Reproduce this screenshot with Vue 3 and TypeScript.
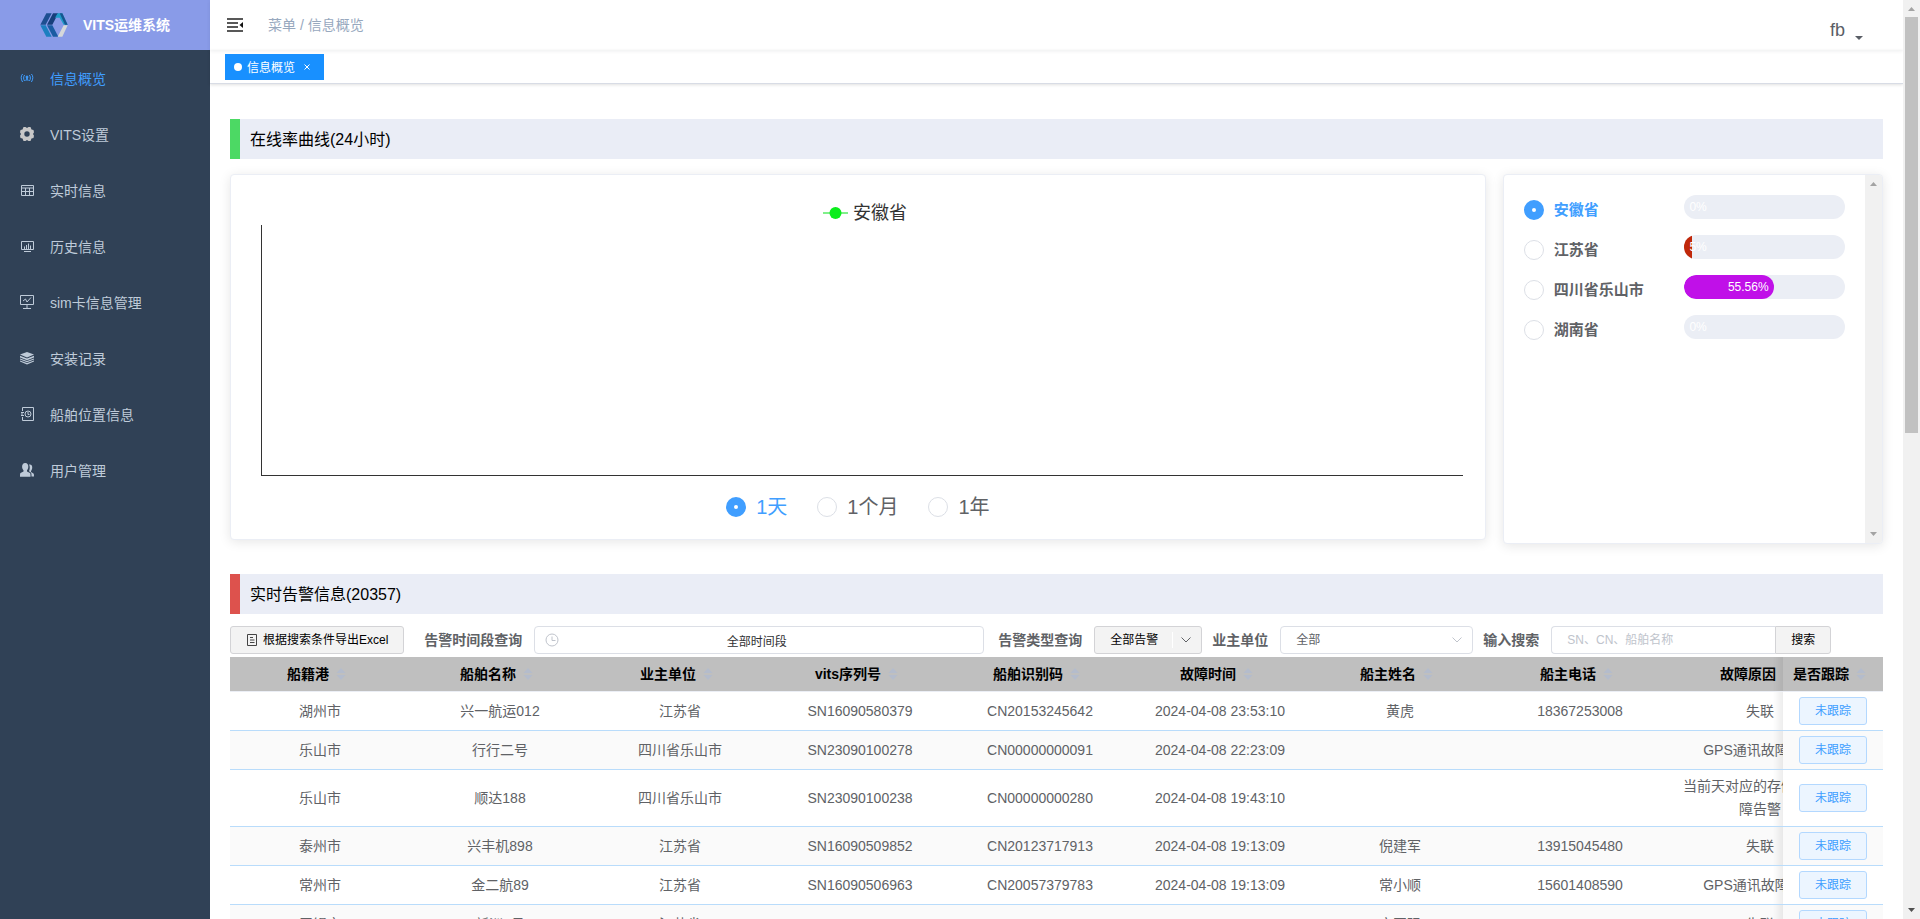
<script setup lang="ts">
import { ref } from 'vue'

interface AlarmRow {
  port: string
  ship: string
  owner: string
  sn: string
  cn: string
  time: string
  person: string
  phone: string
  reason: string
}

interface Province {
  name: string
  rate: number
  color: string
}

const menu: { icon: string; label: string }[] = [
  { icon: 'signal', label: '信息概览' },
  { icon: 'gear', label: 'VITS设置' },
  { icon: 'grid', label: '实时信息' },
  { icon: 'monitor', label: '历史信息' },
  { icon: 'board', label: 'sim卡信息管理' },
  { icon: 'layers', label: '安装记录' },
  { icon: 'book', label: '船舶位置信息' },
  { icon: 'users', label: '用户管理' },
]

const provinces: Province[] = [
  { name: '安徽省', rate: 0, color: '#409eff' },
  { name: '江苏省', rate: 5, color: '#c0280a' },
  { name: '四川省乐山市', rate: 55.56, color: '#c010e8' },
  { name: '湖南省', rate: 0, color: '#409eff' },
]

const ranges: string[] = ['1天', '1个月', '1年']
const columns: string[] = [
  '船籍港', '船舶名称', '业主单位', 'vits序列号', '船舶识别码',
  '故障时间', '船主姓名', '船主电话', '故障原因',
]

const rows: AlarmRow[] = [
  { port: '湖州市', ship: '兴一航运012', owner: '江苏省', sn: 'SN16090580379', cn: 'CN20153245642', time: '2024-04-08 23:53:10', person: '黄虎', phone: '18367253008', reason: '失联' },
  { port: '乐山市', ship: '行行二号', owner: '四川省乐山市', sn: 'SN23090100278', cn: 'CN00000000091', time: '2024-04-08 22:23:09', person: '', phone: '', reason: 'GPS通讯故障告警' },
  { port: '乐山市', ship: '顺达188', owner: '四川省乐山市', sn: 'SN23090100238', cn: 'CN00000000280', time: '2024-04-08 19:43:10', person: '', phone: '', reason: '当前天对应的存储设备故障告警' },
  { port: '泰州市', ship: '兴丰机898', owner: '江苏省', sn: 'SN16090509852', cn: 'CN20123717913', time: '2024-04-08 19:13:09', person: '倪建军', phone: '13915045480', reason: '失联' },
  { port: '常州市', ship: '金二航89', owner: '江苏省', sn: 'SN16090506963', cn: 'CN20057379783', time: '2024-04-08 19:13:09', person: '常小顺', phone: '15601408590', reason: 'GPS通讯故障告警' },
  { port: '无锡市', ship: '新洲1号', owner: '江苏省', sn: '', cn: '', time: '', person: '方国强', phone: '', reason: '失联' },
]

const activeMenu = ref('信息概览')
const province = ref('安徽省')
const range = ref('1天')
const period = ref('全部时间段')
const keyword = ref('')
</script>

<template>
  <div class="layout">
    <aside class="sidebar">
      <div class="brand">
        <svg class="brand-logo" viewBox="0 0 82 72" aria-hidden="true">
          <path d="M18 1H34L16 35H0z" fill="#1d4f91" />
          <path d="M0 37H16L34 71H18z" fill="#1b7fc0" />
          <path d="M38 1H54L36 35H20z" fill="#173f7c" />
          <path d="M20 37H36L54 71H38z" fill="#1a5ca3" />
          <path d="M44 14L52 1H66L82 35H70L58 14z" fill="#1f9cc9" />
          <path d="M58 1H66L82 35H74z" fill="#17568f" />
          <path d="M70 37H82L66 71H52z" fill="#d5d8da" />
        </svg>
        <h1>VITS运维系统</h1>
      </div>
      <nav>
        <a
          v-for="item in menu"
          :key="item.label"
          href="#"
          class="menu-item"
          :class="{ active: activeMenu === item.label }"
          @click.prevent="activeMenu = item.label"
        >
          <svg class="menu-icon" viewBox="0 0 14 14" aria-hidden="true">
            <g v-if="item.icon === 'signal'" fill="none" stroke="currentColor">
              <path d="M2.600 3C.7 4.800.7 8.200 2.600 11M4.600 4C3.300 5.600 3.300 8.400 4.600 10M11.400 3C13.300 4.800 13.300 8.200 11.400 11M9.400 4C10.700 5.600 10.700 8.400 9.400 10" />
              <circle cx="7" cy="6" r="1" fill="currentColor" />
              <path d="M7 6.500L5.800 10M7 6.500L8.200 10" />
            </g>
            <path
              v-else-if="item.icon === 'gear'"
              fill="#c8c8c8"
              fill-rule="evenodd"
              d="M3.500 0H5.500L7 1L8.500 0H10.500L11.500 2.500L13.500 3L14 5.200L13 7L14 8.800L13.500 11L11.500 11.500L10.500 14H8.500L7 13L5.500 14H3.500L2.500 11.500L.5 11L0 8.800L1 7L0 5.200L.5 3L2.500 2.500zM7 4.300A2.700 2.700 0 1 0 7 9.700A2.700 2.700 0 1 0 7 4.300z"
            />
            <g v-else-if="item.icon === 'grid'" fill="none" stroke="currentColor">
              <path d="M1.500 2.500H13.500V12.500H1.500zM1 5H14M1 8.500H14M5.500 5V12M9.500 5V12" />
            </g>
            <g v-else-if="item.icon === 'monitor'" fill="none" stroke="currentColor">
              <path d="M1.500 2.500H13.500V10.500H1.500zM4 12.500H11M4.500 10V7.500M6.500 10V6M8.500 10V4.500M10.500 10V6.500" />
            </g>
            <g v-else-if="item.icon === 'board'" fill="none" stroke="currentColor">
              <path d="M.5 .5H13.500V9.500H.5zM7 10V13.500M3 13.500H11M3 6L5.500 4L7 7L11 2.500" />
            </g>
            <g v-else-if="item.icon === 'layers'" fill="currentColor">
              <path d="M7 1L14 3.600L7 6.400L0 3.600z" />
              <path d="M0 4.800L7 7.400L14 4.800V6.400L7 9.200L0 6.400z" />
              <path d="M0 7.400L7 10L14 7.400V8.600L7 11.200L0 8.600z" />
              <path d="M0 9.600L7 12L14 9.600V10.600L7 13.400L0 10.600z" />
            </g>
            <g v-else-if="item.icon === 'book'" fill="none" stroke="currentColor">
              <path d="M2.500 4V.5H13.500V13.500H2.500V10M1 5.500H4M1 8.500H4M1 7H3" />
              <circle cx="8" cy="7" r="3" />
              <path d="M8 5V7.500H9.500" />
            </g>
            <g v-else fill="currentColor">
              <path d="M5.200 0C7.500 0 8.500 1.800 8.300 4C8.200 5.800 7.500 6.600 7 7.300V8.500L10 10C10.500 10.500 10.500 12 10.500 13.700H0C0 12 0 10.500 .5 10L3.500 8.500V7.300C3 6.600 2.200 5.800 2.100 4C2 1.800 3 0 5.200 0z" />
              <path d="M9 1.500C11.500 1 12.500 3 12.200 5C12 6.500 11.500 7.300 11 8V9L13.500 10.500C14 11 14 12 14 13.500H11.500C11.500 11 11.500 10 10.500 9.200L9 8.200C9.500 7 10.500 4 9 1.500z" />
            </g>
          </svg>
          <span>{{ item.label }}</span>
        </a>
      </nav>
    </aside>

    <div class="main">
      <header class="navbar">
        <button type="button" class="fold" aria-label="菜单">
          <svg viewBox="0 0 16 14" aria-hidden="true">
            <path d="M0 1H16M0 5H11M0 9H11M0 13H16" fill="none" stroke="#222" stroke-width="1.500" />
            <path d="M16 4V10L12.500 7z" fill="#111" />
          </svg>
        </button>
        <div class="breadcrumb"><span>菜单</span> / <span>信息概览</span></div>
        <button type="button" class="account">
          <span>fb</span>
          <svg viewBox="0 0 8 4" aria-hidden="true"><path d="M0 0H8L4 4z" fill="currentColor" /></svg>
        </button>
      </header>

      <div class="tags">
        <a href="#" class="tag" @click.prevent>
          <i class="dot"></i><span>信息概览</span>
          <svg viewBox="0 0 6 6" aria-hidden="true"><path d="M.5 .5L5.500 5.500M5.500 .5L.5 5.500" stroke="#fff" fill="none" /></svg>
        </a>
      </div>

      <main class="content">
        <h2 class="section online">在线率曲线(24小时)</h2>

        <div class="overview">
          <section class="card chart-card">
            <div class="chart">
              <div class="legend">
                <svg viewBox="0 0 25 12" aria-hidden="true">
                  <path d="M0 6H25" stroke="#80f08a" stroke-width="2" />
                  <circle cx="12.500" cy="6" r="6" fill="#0bed1c" />
                </svg>
                <span>{{ province }}</span>
              </div>
              <div class="plot"></div>
            </div>
            <div class="ranges">
              <label v-for="r in ranges" :key="r" class="radio">
                <input v-model="range" type="radio" name="range" :value="r" />
                <span>{{ r }}</span>
              </label>
            </div>
          </section>

          <section class="card province-card">
            <ul class="provinces">
              <li v-for="p in provinces" :key="p.name">
                <label class="radio">
                  <input v-model="province" type="radio" name="province" :value="p.name" />
                  <span>{{ p.name }}</span>
                </label>
                <div class="bar">
                  <div class="fill" :class="{ thin: p.rate < 10 }" :style="{ width: p.rate + '%', background: p.color }">
                    <span>{{ p.rate }}%</span>
                  </div>
                </div>
              </li>
            </ul>
            <div class="scroll inner">
              <svg viewBox="0 0 7 4" aria-hidden="true"><path d="M0 4H7L3.500 0z" fill="#a3a3a3" /></svg>
              <svg viewBox="0 0 7 4" aria-hidden="true"><path d="M0 0H7L3.500 4z" fill="#a3a3a3" /></svg>
            </div>
          </section>
        </div>

        <h2 class="section alarm">实时告警信息(20357)</h2>

        <form class="toolbar" @submit.prevent>
          <button type="button" class="btn export">
            <svg viewBox="0 0 12 12" aria-hidden="true">
              <path d="M1.500 .5H10.500V11.500H1.500zM4 3.500H7M4 6H8.500M4 8.500H8.500" fill="none" stroke="#444" />
            </svg>
            根据搜索条件导出Excel
          </button>
          <label for="period">告警时间段查询</label>
          <div class="field period">
            <svg viewBox="0 0 14 14" aria-hidden="true">
              <circle cx="7" cy="7" r="6" fill="none" stroke="#c0c4cc" />
              <path d="M7 3.500V7.500H10.500" fill="none" stroke="#c0c4cc" />
            </svg>
            <input id="period" v-model="period" type="text" />
          </div>
          <label for="kind">告警类型查询</label>
          <div class="field kind">
            <select id="kind"><option>全部告警</option></select>
            <svg viewBox="0 0 10 6" aria-hidden="true"><path d="M.5 .5L5 5L9.500 .5" fill="none" stroke="#606266" /></svg>
          </div>
          <label for="owner">业主单位</label>
          <div class="field owner">
            <select id="owner"><option>全部</option></select>
            <svg viewBox="0 0 10 6" aria-hidden="true"><path d="M.5 .5L5 5L9.500 .5" fill="none" stroke="#c0c4cc" /></svg>
          </div>
          <label for="keyword">输入搜索</label>
          <div class="search">
            <input id="keyword" v-model="keyword" type="text" placeholder="SN、CN、船舶名称" />
            <button type="submit" class="btn">搜索</button>
          </div>
        </form>

        <div class="table-wrap">
          <table>
            <colgroup>
              <col v-for="c in columns" :key="c" class="col" />
              <col class="col-fixed" />
            </colgroup>
            <thead>
              <tr>
                <th v-for="c in [...columns, '是否跟踪']" :key="c" scope="col" :class="{ fixed: c === '是否跟踪' }">
                  <div class="head">
                    <span>{{ c }}</span>
                    <svg viewBox="0 0 24 14" aria-hidden="true">
                      <path d="M7.500 6L12 1L16.500 6zM7.500 8L12 13L16.500 8z" fill="#b4bccc" />
                    </svg>
                  </div>
                </th>
              </tr>
            </thead>
            <tbody>
              <tr v-for="row in rows" :key="row.time + row.port">
                <td>{{ row.port }}</td>
                <td>{{ row.ship }}</td>
                <td>{{ row.owner }}</td>
                <td>{{ row.sn }}</td>
                <td>{{ row.cn }}</td>
                <td>{{ row.time }}</td>
                <td>{{ row.person }}</td>
                <td>{{ row.phone }}</td>
                <td>{{ row.reason }}</td>
                <td class="fixed"><button type="button" class="track">未跟踪</button></td>
              </tr>
            </tbody>
          </table>
        </div>
      </main>
    </div>

    <div class="scroll page">
      <svg viewBox="0 0 7 4" aria-hidden="true"><path d="M0 4H7L3.500 0z" fill="#a3a3a3" /></svg>
      <div class="thumb"></div>
      <svg viewBox="0 0 7 4" aria-hidden="true"><path d="M0 0H7L3.500 4z" fill="#505050" /></svg>
    </div>
  </div>
</template>

<style>
body {
  margin: 0;
  overflow: hidden;
}
</style>

<style scoped>
.layout {
  display: grid;
  grid-template-columns: 210px minmax(0, 1fr) 17px;
  height: 100vh;
  overflow: hidden;
  background: #fff;
  color: #606266;
  font: 14px/20px "Liberation Sans", "Noto Sans CJK SC", sans-serif;
}
.layout *,
.layout *::before {
  box-sizing: border-box;
}
button,
input,
select {
  font: inherit;
  color: inherit;
  margin: 0;
}
svg {
  display: block;
  flex: none;
}
.sidebar {
  background: #304156;
}
.brand {
  display: flex;
  align-items: center;
  justify-content: center;
  gap: 15px;
  height: 50px;
  background: #899be8;
}
.brand-logo {
  width: 28px;
  height: 24px;
}
h1 {
  margin: 0;
  color: #fff;
  font-size: 14px;
}
.menu-item {
  display: flex;
  align-items: center;
  gap: 16px;
  height: 56px;
  padding: 0 20px;
  color: #bfcbd9;
  text-decoration: none;
}
.menu-item.active {
  color: #409eff;
}
.menu-item span {
  padding-top: 2px;
}
.menu-icon {
  width: 14px;
  height: 14px;
}
.main {
  display: flex;
  flex-direction: column;
  min-height: 0;
}
.navbar {
  display: flex;
  align-items: center;
  flex: none;
  height: 50px;
  padding: 0 40px 0 17px;
  box-shadow: 0 1px 4px rgba(0, 21, 41, 0.08);
}
.fold,
.account {
  border: 0;
  padding: 0;
  background: none;
}
.fold svg {
  width: 16px;
  height: 14px;
}
.breadcrumb {
  margin-left: 25px;
  color: #97a8be;
}
.account {
  display: flex;
  align-items: flex-end;
  gap: 10px;
  margin-left: auto;
  padding-top: 10px;
  color: #5a5e66;
  font-size: 18px;
}
.account svg {
  width: 8px;
  height: 4px;
}
.tags {
  flex: none;
  height: 34px;
  padding: 4px 15px 0;
  border-bottom: 1px solid #d8dce5;
  box-shadow: 0 1px 3px rgba(0, 0, 0, 0.12);
}
.tag {
  display: inline-flex;
  align-items: center;
  height: 26px;
  padding: 0 14px 0 9px;
  background: #1890ff;
  color: #fff;
  font-size: 12px;
  text-decoration: none;
}
.tag span {
  padding-top: 1px;
}
.dot {
  width: 8px;
  height: 8px;
  margin-right: 5px;
  border-radius: 50%;
  background: #fff;
}
.tag svg {
  width: 6px;
  height: 6px;
  margin-left: 9px;
}
.content {
  flex: 1;
  min-height: 0;
  overflow: hidden;
  padding: 35px 20px 0;
}
.section {
  margin: 0;
  padding: 2px 0 0 10px;
  border-left: 10px solid #4cd964;
  background: #eaedf6;
  color: #000;
  font-size: 16px;
  font-weight: 400;
  line-height: 38px;
}
.section.alarm {
  border-left-color: #dd524d;
}
.overview {
  display: grid;
  grid-template-columns: minmax(0, 1fr) 23%;
  align-items: start;
  gap: 17px;
  margin: 15px 0 30px;
}
.card {
  border: 1px solid #ebeef5;
  border-radius: 4px;
  background: #fff;
  box-shadow: 0 2px 12px rgba(0, 0, 0, 0.1);
}
.chart-card {
  padding-bottom: 21px;
}
.chart {
  margin: 0 22px 0 30px;
}
.legend {
  display: flex;
  align-items: center;
  justify-content: center;
  gap: 5px;
  padding: 26px 0 0 6px;
  color: #333;
  font-size: 18px;
  line-height: 24px;
}
.legend svg {
  width: 25px;
  height: 12px;
}
.plot {
  height: 251px;
  border: solid #333;
  border-width: 0 0 1px 1px;
}
.ranges {
  display: flex;
  justify-content: center;
  gap: 30px;
  margin-top: 20px;
  font-size: 20px;
  line-height: 22px;
}
.radio {
  display: flex;
  align-items: center;
  gap: 10px;
}
.radio input {
  appearance: none;
  flex: none;
  width: 20px;
  height: 20px;
  border: 1px solid #dcdfe6;
  border-radius: 50%;
  background: #fff;
}
.radio input:checked {
  border: 8px solid #409eff;
}
.radio input:checked + span {
  color: #409eff;
}
.province-card {
  display: flex;
  height: 370px;
  overflow: hidden;
}
.provinces {
  flex: 1;
  margin: 0;
  padding: 20px;
  list-style: none;
}
.provinces li {
  display: flex;
  align-items: flex-start;
  justify-content: space-between;
  height: 40px;
}
.provinces .radio {
  height: 30px;
  font-size: 15px;
  font-weight: 700;
}
.bar {
  width: 50%;
  height: 24px;
  overflow: hidden;
  border-radius: 12px;
  background: #ebeef5;
}
.fill {
  height: 24px;
  border-radius: 12px;
  color: #fff;
  font-size: 12px;
  line-height: 24px;
  text-align: right;
  white-space: nowrap;
}
.fill.thin {
  border-radius: 0;
}
.fill span {
  margin: 0 5px;
}
.scroll {
  display: flex;
  flex-direction: column;
  align-items: center;
  justify-content: space-between;
  background: #f1f1f1;
}
.scroll svg {
  width: 7px;
  height: 4px;
}
.scroll.inner {
  flex: none;
  width: 17px;
  padding: 7px 0;
}
.scroll.page {
  padding: 7px 0;
  justify-content: flex-start;
}
.thumb {
  width: 13px;
  height: 46%;
  margin: 6px 0 auto;
  background: #c1c1c1;
}
.toolbar {
  display: flex;
  align-items: center;
  margin: 12px 0 3px;
}
.toolbar label {
  flex: none;
  margin-right: 12px;
  font-weight: 700;
}
.btn {
  display: flex;
  align-items: center;
  flex: none;
  height: 28px;
  padding: 0 15px;
  border: 1px solid #d3d3d6;
  border-radius: 3px;
  background: #f3f3f3;
  color: #000;
  font-size: 12px;
}
.export {
  gap: 5px;
  margin-right: 20px;
}
.export svg {
  width: 12px;
  height: 12px;
}
.field {
  display: grid;
  align-items: center;
  flex: none;
  height: 28px;
  margin-right: 10px;
  border: 1px solid #dcdfe6;
  border-radius: 4px;
  background: #fff;
  font-size: 12px;
}
.field > * {
  grid-area: 1 / 1;
}
.field input,
.field select {
  appearance: none;
  width: 100%;
  height: 26px;
  padding: 0 15px;
  border: 0;
  background: none;
}
.field svg {
  justify-self: end;
  width: 10px;
  height: 6px;
  margin-right: 10px;
  pointer-events: none;
}
.period {
  flex: 0 1 450px;
  margin-right: 14px;
}
.field.period svg {
  justify-self: start;
  width: 14px;
  height: 14px;
  margin-left: 10px;
}
.field.period input {
  padding-right: 20px;
  color: #303133;
  text-align: center;
}
.kind {
  width: 108px;
  border-color: #d3d3d6;
  border-radius: 3px;
  background: #f3f3f3;
  color: #000;
}
.kind::after {
  content: "";
  grid-area: 1 / 1;
  justify-self: end;
  width: 1px;
  height: 16px;
  margin-right: 28px;
  background: #fff;
}
.owner {
  width: 193px;
}
.search {
  display: flex;
  flex: 0 1 280px;
  font-size: 12px;
}
.search input {
  flex: 1;
  min-width: 0;
  height: 28px;
  padding: 0 15px;
  border: 1px solid #dcdfe6;
  border-right: 0;
  border-radius: 4px 0 0 4px;
  background: #fff;
}
.search input::placeholder {
  color: #c0c4cc;
}
.search .btn {
  border-radius: 0 3px 3px 0;
}
.table-wrap {
  overflow: hidden;
}
table {
  width: 1720px;
  border-spacing: 0;
  table-layout: fixed;
}
.col {
  width: 180px;
}
.col-fixed {
  width: 100px;
}
th {
  height: 35px;
  padding: 0;
  border-bottom: 1px solid #ebeef5;
  background: #bfbfbf;
  color: #000;
}
.head {
  display: flex;
  align-items: center;
  justify-content: center;
}
.head svg {
  width: 24px;
  height: 14px;
}
td {
  height: 39px;
  padding: 5px 10px;
  border-bottom: 1px solid #b9dcfb;
  background: #fff;
  line-height: 23px;
  text-align: center;
}
tbody tr:nth-child(even) td {
  background: #fafafa;
}
.fixed {
  position: sticky;
  right: 0;
}
.fixed::before {
  content: "";
  position: absolute;
  top: 0;
  bottom: 0;
  left: -10px;
  width: 10px;
  background: linear-gradient(to left, rgba(0, 0, 0, 0.07), rgba(0, 0, 0, 0));
}
.track {
  display: block;
  width: 68px;
  height: 28px;
  margin: 0 auto;
  padding: 0;
  border: 1px solid #b3d8ff;
  border-radius: 3px;
  background: #ecf5ff;
  color: #409eff;
  font-size: 12px;
}
</style>
